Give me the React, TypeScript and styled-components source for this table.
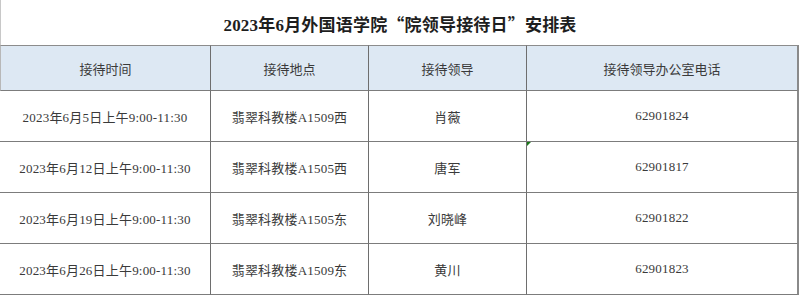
import React from "react";
import styled, { createGlobalStyle } from "styled-components";

const Global = createGlobalStyle`
  html, body { margin: 0; padding: 0; background: #ffffff; }
  body { font-family: "Liberation Serif", "Noto Sans CJK SC", serif; }
`;

const Page = styled.div`
  width: 799px;
  height: 296px;
  background: #ffffff;
  overflow: hidden;
`;

const Title = styled.div`
  height: 45px;
  display: flex;
  align-items: center;
  justify-content: center;
  box-sizing: border-box;
  border-left: 1px solid #c8c8c8;
  padding-top: 2px;
  font-size: 17px;
  font-weight: 700;
  color: #1e1e1e;
  letter-spacing: 0.2px;
`;

const Quote = styled.span`
  font-family: "Noto Sans CJK SC", sans-serif;
  font-weight: 700;
`;

const Grid = styled.div`
  display: grid;
  grid-template-columns: 211px 158px 158px 272px;
`;

const Cell = styled.div<{ $head?: boolean; $first?: boolean; $last?: boolean }>`
  position: relative;
  box-sizing: border-box;
  height: ${(p) => (p.$head ? "46px" : "51px")};
  display: flex;
  align-items: center;
  justify-content: center;
  font-size: 13px;
  letter-spacing: ${(p) => (p.$head ? "0" : "0.2px")};
  color: #3a3a3a;
  background: ${(p) => (p.$head ? "#dde8f3" : "#ffffff")};
  border-top: ${(p) => (p.$head ? "1px solid #8c8c8c" : "none")};
  border-bottom: 1px solid #7c7c7c;
  border-right: ${(p) => (p.$last ? "2px solid #8a8a8a" : "1px solid #6e6e6e")};
  border-left: ${(p) => (p.$head && p.$first ? "1px solid #b8b8b8" : "none")};
  white-space: nowrap;
`;

const Flag = styled.span`
  position: absolute;
  left: 0;
  top: 0;
  width: 0;
  height: 0;
  border-top: 4px solid #1a7a1a;
  border-right: 4px solid transparent;
`;

const headers = ["接待时间", "接待地点", "接待领导", "接待领导办公室电话"];

const rows = [
  ["2023年6月5日上午9:00-11:30", "翡翠科教楼A1509西", "肖薇", "62901824"],
  ["2023年6月12日上午9:00-11:30", "翡翠科教楼A1505西", "唐军", "62901817"],
  ["2023年6月19日上午9:00-11:30", "翡翠科教楼A1505东", "刘晓峰", "62901822"],
  ["2023年6月26日上午9:00-11:30", "翡翠科教楼A1509东", "黄川", "62901823"],
];

export default function App() {
  return (
    <Page>
      <Global />
      <Title>
        2023年6月外国语学院<Quote>“</Quote>院领导接待日<Quote>”</Quote>安排表
      </Title>
      <Grid>
        {headers.map((h, i) => (
          <Cell key={h} $head $first={i === 0} $last={i === 3}>
            {h}
          </Cell>
        ))}
        {rows.map((r, ri) =>
          r.map((c, ci) => (
            <Cell key={`${ri}-${ci}`} $last={ci === 3}>
              {ri === 1 && ci === 3 && <Flag />}
              {c}
            </Cell>
          ))
        )}
      </Grid>
    </Page>
  );
}
